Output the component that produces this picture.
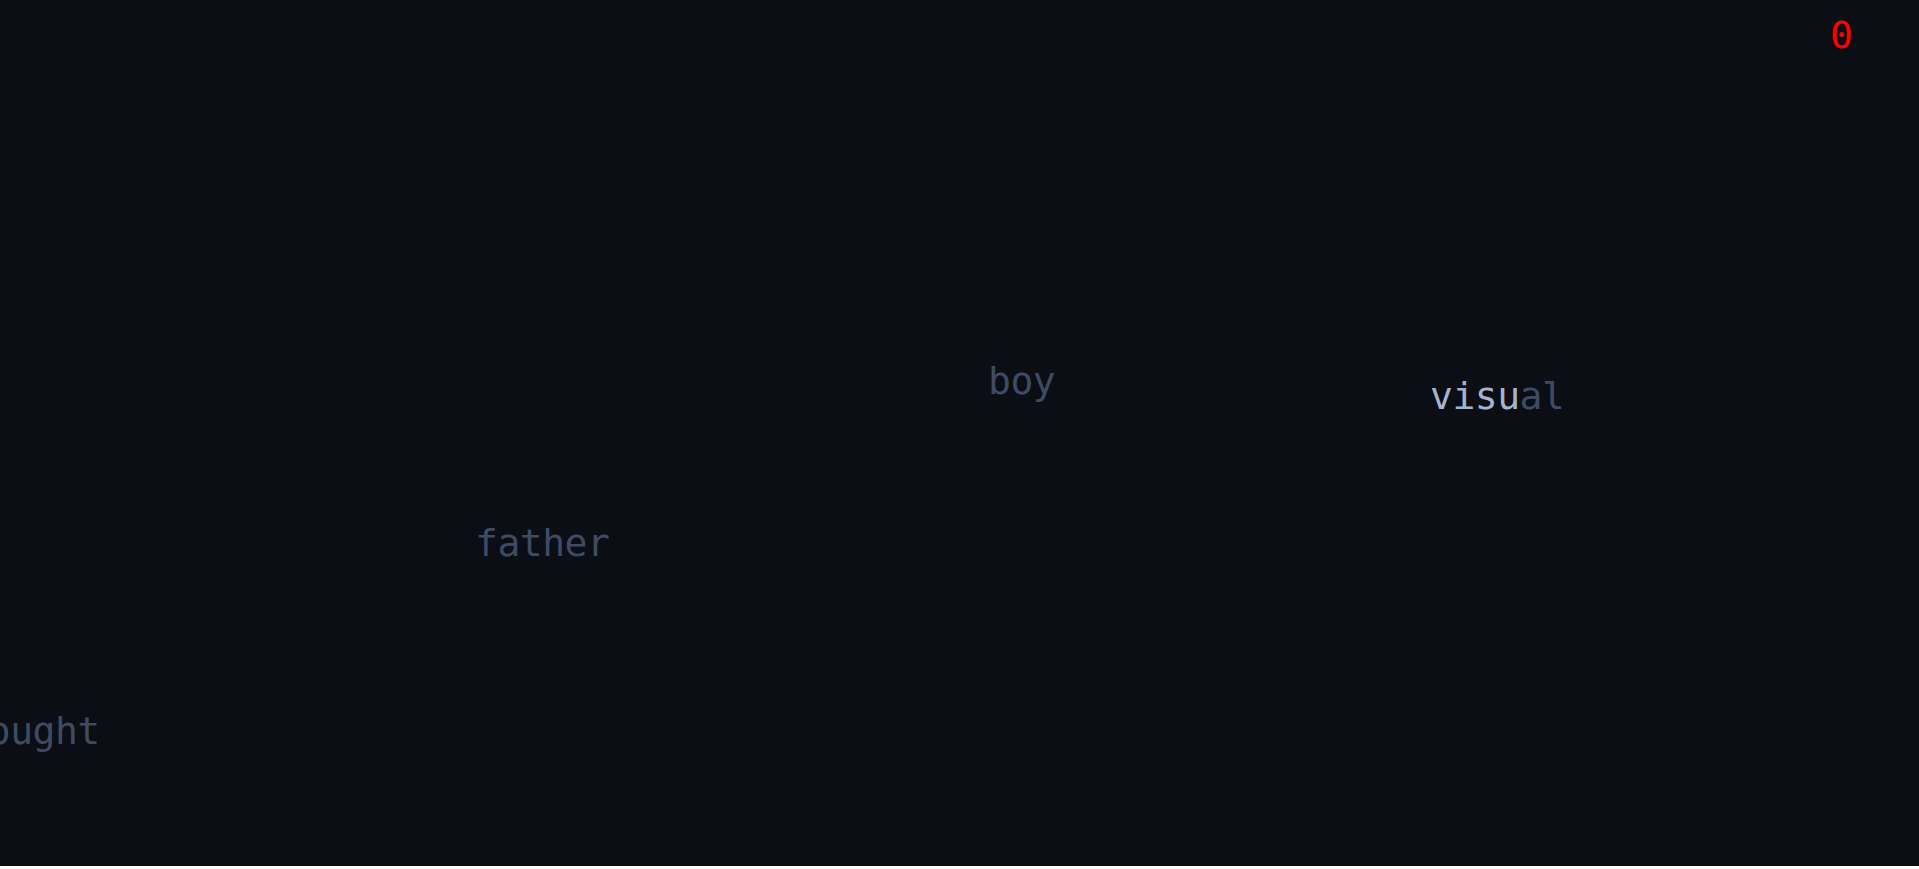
import React from 'react';

const words = [
  { text: 'boy', typed: 0, x: 988, y: 362 },
  { text: 'visual', typed: 4, x: 1430, y: 377 },
  { text: 'father', typed: 0, x: 475, y: 524 },
  { text: 'thought', typed: 0, x: -57, y: 712 },
];

function Word({ text, typed, x, y }) {
  return (
    <div
      className="absolute whitespace-nowrap text-[38px] leading-none tracking-[-0.5px]"
      style={{ left: x, top: y }}
    >
      <span className="text-[#a5b3ce]">{text.slice(0, typed)}</span>
      <span className="text-[#3e4b63]">{text.slice(typed)}</span>
    </div>
  );
}

export default function App() {
  return (
    <div
      className="relative h-[866px] w-full overflow-hidden bg-[#0b0e14]"
      style={{ fontFamily: '"DejaVu Sans Mono", "Liberation Mono", monospace' }}
    >
      <div className="absolute right-[66px] top-[16px] text-[38px] leading-none text-[#ff0000] slashed-zero">0</div>
      {words.map((w) => (
        <Word key={w.text} {...w} />
      ))}
    </div>
  );
}
